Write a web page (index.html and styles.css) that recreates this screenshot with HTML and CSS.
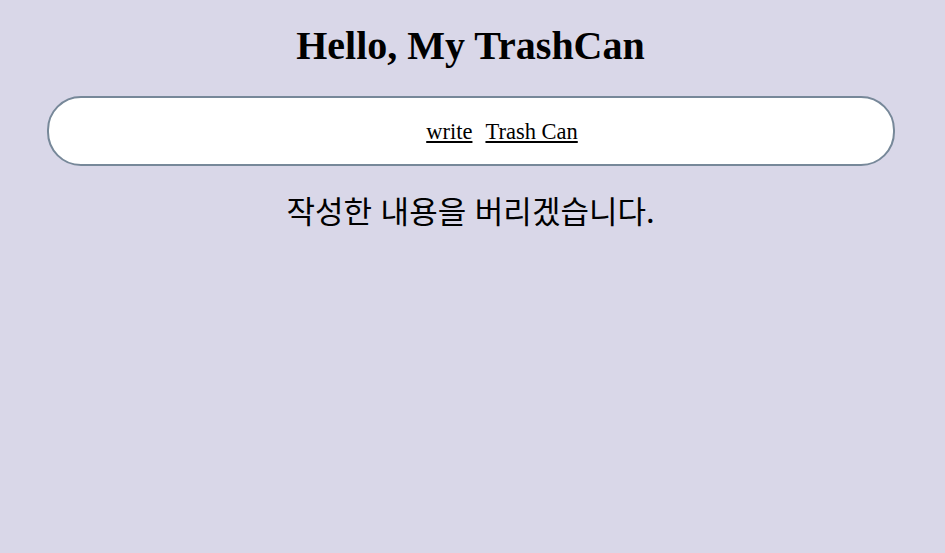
FILE: index.html
```html
<!DOCTYPE html>
<html lang="ko">
<head>
<meta charset="utf-8">
<link rel="stylesheet" href="styles.css">
</head>
<body>
<h1 class="title">Hello, My TrashCan</h1>
<nav class="nav">
  <a href="#" class="nav-link">write</a>
  <a href="#" class="nav-link">Trash Can</a>
</nav>
<p class="message">작성한 내용을 버리겠습니다.</p>
</body>
</html>
```
FILE: styles.css
```css
html { background: #d9d7e8; }
body {
  margin: 0 12px 0 8px;
  font-family: "Liberation Serif", "Noto Sans CJK KR", serif;
  text-align: center;
  color: #000;
}
.title {
  margin: 0;
  padding-top: 23px;
  font-size: 40px;
  line-height: 46px;
  font-weight: bold;
}
.nav {
  margin: 27px 38px 0 39px;
  height: 64px;
  background: #fff;
  border: 2px solid #778899;
  border-radius: 34px;
  display: flex;
  justify-content: center;
  align-items: center;
  gap: 13px;
  padding: 2px 0 0 62px;
  box-sizing: content-box;
}
.nav-link {
  color: #000;
  font-size: 22.5px;
}
.message {
  margin: 23px 0 0;
  font-family: "Noto Sans CJK KR", sans-serif;
  font-size: 31px;
  line-height: 42px;
}
```
